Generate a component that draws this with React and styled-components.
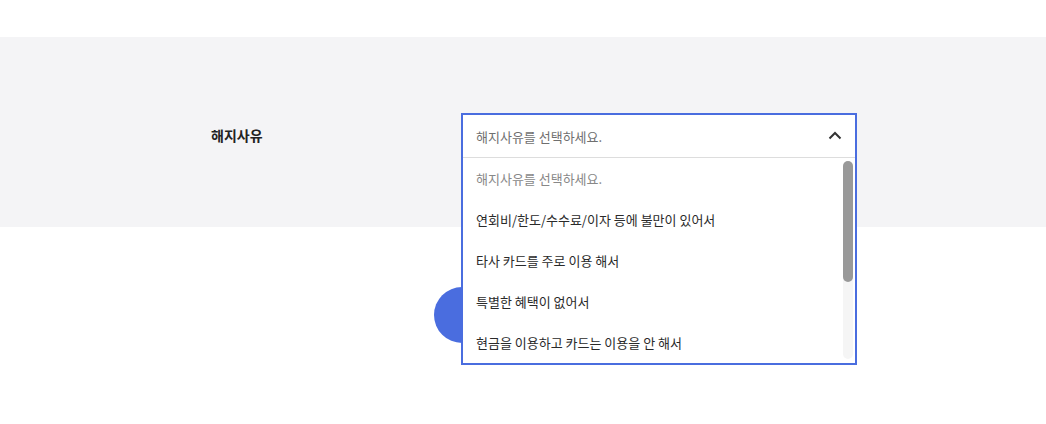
import React, { useState } from 'react'
import styled, { createGlobalStyle } from 'styled-components'

const reasons = [
  '해지사유를 선택하세요.',
  '연회비/한도/수수료/이자 등에 불만이 있어서',
  '타사 카드를 주로 이용 해서',
  '특별한 혜택이 없어서',
  '현금을 이용하고 카드는 이용을 안 해서',
  '카드 분실/도난 우려로',
  '기타',
  '직접 입력',
]

function App() {
  const [open, setOpen] = useState(true)
  const [selected, setSelected] = useState(0)

  return (
    <Page>
      <GlobalStyle />
      <FormSection>
        <Row>
          <Label>해지사유</Label>
          <Field>
            <Select $open={open}>
              <SelectHead onClick={() => setOpen(!open)}>
                <HeadText $placeholder={selected === 0}>{reasons[selected]}</HeadText>
                <svg width='14' height='9' viewBox='0 0 14 9' fill='none'>
                  <path d='M1.5 7.5L7 2L12.5 7.5' stroke='#333' strokeWidth='2' />
                </svg>
              </SelectHead>
              {open && (
                <ListWrap>
                  <List>
                    {reasons.slice(0, 5).map((r, i) => (
                      <Option
                        key={r}
                        $placeholder={i === 0}
                        onClick={() => {
                          setSelected(i)
                          setOpen(false)
                        }}
                      >
                        {r}
                      </Option>
                    ))}
                  </List>
                  <ScrollTrack>
                    <ScrollThumb />
                  </ScrollTrack>
                </ListWrap>
              )}
            </Select>
          </Field>
        </Row>
      </FormSection>
      <ButtonArea>
        <SubmitButton aria-label='해지신청' />
      </ButtonArea>
    </Page>
  )
}

export default App

const GlobalStyle = createGlobalStyle`
  body {
    margin: 0;
    background: #fff;
    font-family: 'Noto Sans CJK KR', 'Noto Sans', sans-serif;
    color: #222;
  }
`
const Page = styled.div`
  padding-top: 37px;
  width: 1046px;
  height: 424px;
  box-sizing: border-box;
  overflow: hidden;
`
const FormSection = styled.section`
  height: 190px;
  box-sizing: border-box;
  padding: 76px 0 0 211px;
  background: #f4f4f6;
`
const Row = styled.div`
  display: flex;
  align-items: flex-start;
`
const Label = styled.span`
  width: 250px;
  font-size: 14px;
  font-weight: 700;
  line-height: 44px;
  color: #222;
`
const Field = styled.div`
  position: relative;
  width: 396px;
  height: 46px;
`
const Select = styled.div`
  position: absolute;
  top: 0;
  left: 0;
  right: 0;
  z-index: 2;
  background: #fff;
  border: 2px solid ${(props) => (props.$open ? '#4a6ddf' : '#ccc')};
`
const SelectHead = styled.div`
  display: flex;
  align-items: center;
  justify-content: space-between;
  height: 42px;
  padding: 0 13px 0 13px;
  border-bottom: 1px solid #ddd;
  cursor: pointer;
  svg {
    margin-top: -2px;
  }
`
const HeadText = styled.span`
  font-size: 13px;
  color: ${(props) => (props.$placeholder ? '#6f6f6f' : '#333')};
`
const ListWrap = styled.div`
  display: flex;
  height: 205px;
`
const List = styled.ul`
  flex: 1;
  margin: 0;
  padding: 0;
  list-style: none;
  overflow: hidden;
`
const Option = styled.li`
  height: 41px;
  padding-left: 13px;
  display: flex;
  align-items: center;
  font-size: 13px;
  color: ${(props) => (props.$placeholder ? '#888' : '#2a2a2a')};
  cursor: pointer;
`
const ScrollTrack = styled.div`
  width: 10px;
  margin: 3px 2px 4px 0;
  border-radius: 5px;
  background: #f5f5f5;
`
const ScrollThumb = styled.div`
  height: 121px;
  border-radius: 5px;
  background: #999;
`
const ButtonArea = styled.div`
  display: flex;
  justify-content: center;
  padding-top: 60px;
`
const SubmitButton = styled.button`
  width: 178px;
  height: 56px;
  border: 0;
  border-radius: 28px;
  background: #4a6ddf;
`
